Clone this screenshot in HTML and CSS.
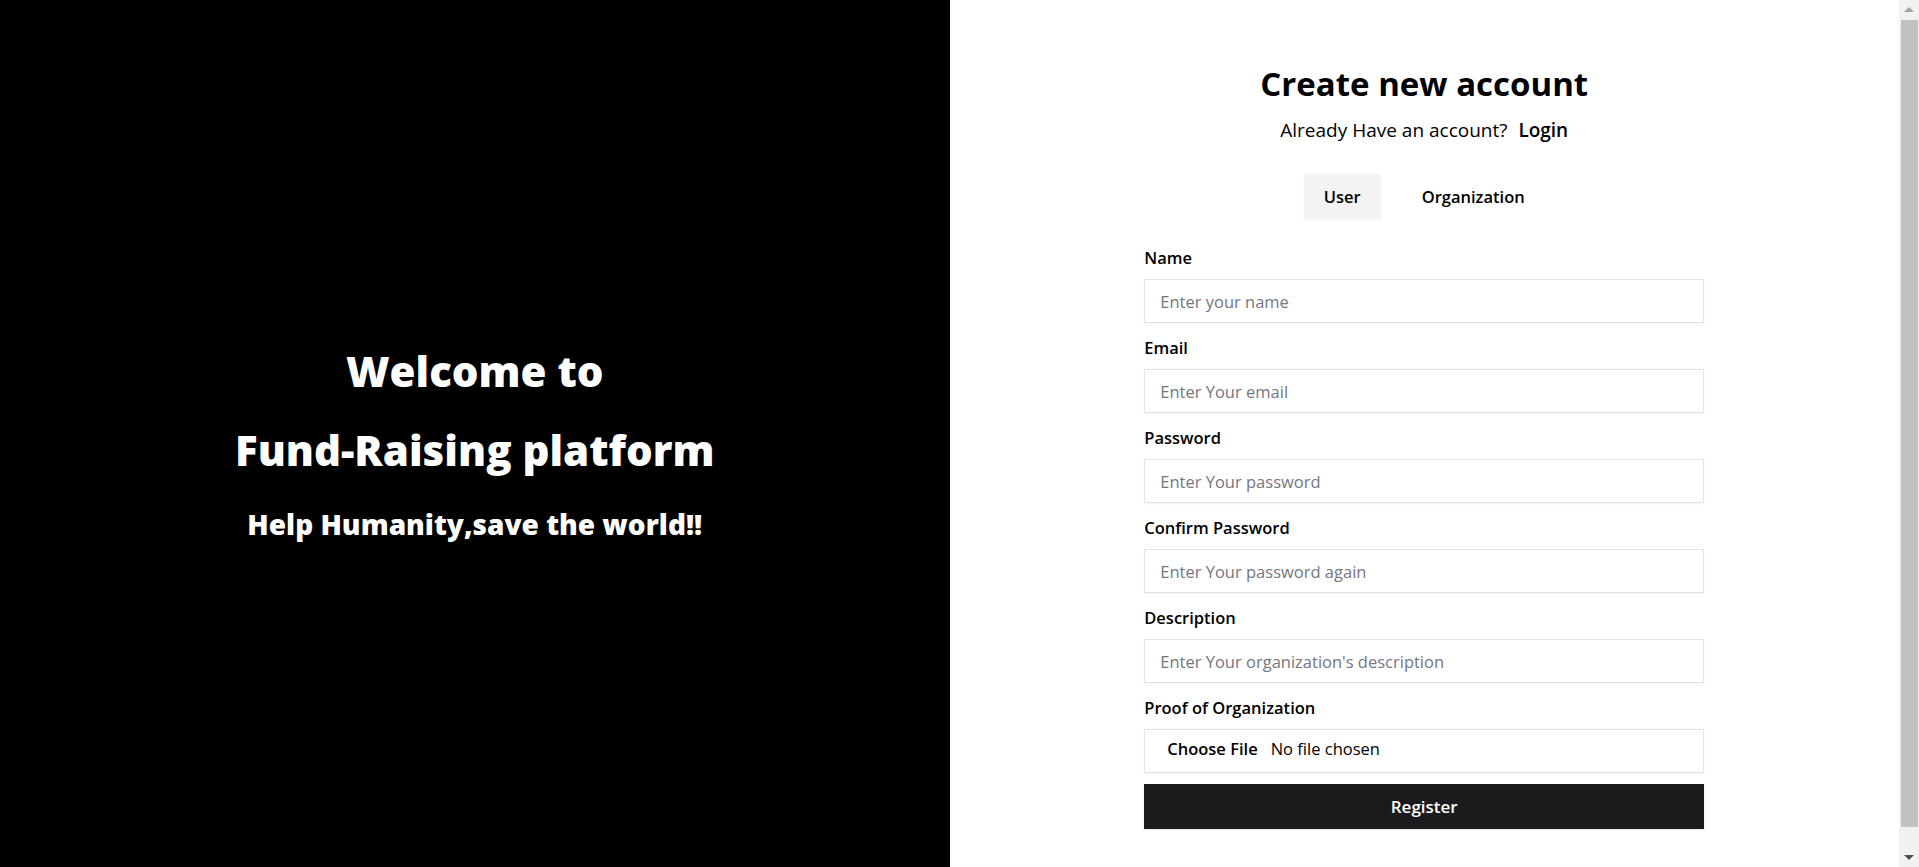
FILE: index.html
```html
<!DOCTYPE html>
<html lang="en">
<head>
<meta charset="utf-8">
<title>Create new account</title>
<link rel="stylesheet" href="styles.css">
</head>
<body>
<div class="page">
  <section class="hero">
    <div class="hero-text">
      <h1 class="hero-line hero-line--welcome">Welcome to</h1>
      <h1 class="hero-line hero-line--brand">Fund-Raising platform</h1>
      <h3 class="hero-line hero-line--sub">Help Humanity,save the world!!</h3>
    </div>
  </section>
  <section class="panel">
    <h2 class="panel-title">Create new account</h2>
    <p class="panel-alt">Already Have an account? <a class="panel-link" href="#">Login</a></p>
    <div class="tabs">
      <button class="tab tab--active" type="button">User</button>
      <button class="tab" type="button">Organization</button>
    </div>
    <form class="form">
      <div class="field">
        <label class="field-label">Name</label>
        <input class="field-input" type="text" placeholder="Enter your name">
      </div>
      <div class="field">
        <label class="field-label">Email</label>
        <input class="field-input" type="email" placeholder="Enter Your email">
      </div>
      <div class="field">
        <label class="field-label">Password</label>
        <input class="field-input" type="password" placeholder="Enter Your password">
      </div>
      <div class="field">
        <label class="field-label">Confirm Password</label>
        <input class="field-input" type="password" placeholder="Enter Your password again">
      </div>
      <div class="field">
        <label class="field-label">Description</label>
        <input class="field-input" type="text" placeholder="Enter Your organization's description">
      </div>
      <div class="field field--last">
        <label class="field-label">Proof of Organization</label>
        <div class="file-field">
          <span class="file-btn">Choose File</span>
          <span class="file-name">No file chosen</span>
        </div>
      </div>
      <button class="submit" type="button">Register</button>
    </form>
  </section>
</div>
<div class="scrollbar" aria-hidden="true">
  <span class="scrollbar-arrow scrollbar-arrow--up"></span>
  <span class="scrollbar-thumb"></span>
  <span class="scrollbar-arrow scrollbar-arrow--down"></span>
</div>
</body>
</html>
```

FILE: styles.css
```css
* {
  box-sizing: border-box;
}

html, body {
  margin: 0;
  padding: 0;
}

body {
  font-family: "Open Sans", "Noto Sans", "Liberation Sans", sans-serif;
  color: #000;
  background: #fff;
}

.page {
  display: flex;
  min-height: 896px;
  margin-right: 20px;
}

/* left hero */
.hero {
  flex: 0 0 50%;
  background: #000;
  color: #fff;
  display: flex;
  align-items: center;
  justify-content: center;
  padding-bottom: 9px;
}

.hero-text {
  text-align: center;
}

.hero-line {
  margin: 0;
  font-weight: 800;
}

.hero-line--welcome {
  font-size: 42px;
  line-height: 50px;
}

.hero-line--brand {
  font-size: 42px;
  line-height: 50px;
  margin-top: 29px;
}

.hero-line--sub {
  font-size: 28px;
  line-height: 36px;
  margin-top: 31px;
}

/* right panel */
.panel {
  flex: 0 0 50%;
  display: flex;
  flex-direction: column;
  align-items: center;
  padding: 62px 0 67px;
}

.panel-title {
  margin: 0;
  font-size: 33px;
  line-height: 43px;
  font-weight: 700;
}

.panel-alt {
  margin: 12px 0 0;
  font-size: 19px;
  line-height: 26px;
}

.panel-link {
  color: #000;
  font-weight: 600;
  text-decoration: none;
  margin-left: 6px;
}

.tabs {
  display: flex;
  gap: 21px;
  margin-top: 31px;
}

.tab {
  font-family: inherit;
  font-size: 16.5px;
  font-weight: 600;
  color: #000;
  background: transparent;
  border: none;
  height: 45px;
  padding: 0 20px;
  cursor: pointer;
}

.tab--active {
  background: #f3f3f3;
  box-shadow: 0 1px 2px rgba(0, 0, 0, 0.06);
}

.form {
  width: 560px;
  margin-top: 28px;
  display: flex;
  flex-direction: column;
}

.field {
  display: flex;
  flex-direction: column;
  margin-bottom: 14px;
}

.field--last {
  margin-bottom: 11px;
}

.field-label {
  font-size: 16.5px;
  line-height: 24px;
  font-weight: 600;
  margin-bottom: 8px;
  position: relative;
  top: -1px;
}

.field-input,
.file-field {
  height: 44px;
  border: 1px solid #e3e3e3;
  box-shadow: 0 1px 2px rgba(0, 0, 0, 0.06);
  background: #fff;
  font-family: inherit;
  font-size: 16.5px;
  padding: 0 15px;
  outline: none;
}

.field-input::placeholder {
  color: #767680;
}

.file-field {
  display: flex;
  align-items: center;
  padding-left: 22px;
  padding-bottom: 5px;
  gap: 13px;
}

.file-btn {
  font-weight: 600;
}

.submit {
  height: 45px;
  border: none;
  background: #1b1b1d;
  color: #fff;
  font-family: inherit;
  font-size: 17px;
  font-weight: 600;
  cursor: pointer;
  box-shadow: 0 1px 2px rgba(0, 0, 0, 0.1);
}

/* faux classic scrollbar */
.scrollbar {
  position: fixed;
  top: 0;
  right: 0;
  bottom: 0;
  width: 20px;
  background: #f1f1f1;
}

.scrollbar-thumb {
  position: absolute;
  top: 20px;
  bottom: 40px;
  left: 2px;
  right: 1px;
  background: #c1c1c1;
}

.scrollbar-arrow {
  position: absolute;
  left: 5px;
  width: 0;
  height: 0;
  border-left: 5px solid transparent;
  border-right: 5px solid transparent;
}

.scrollbar-arrow--up {
  top: 7px;
  border-bottom: 5px solid #a3a3a3;
}

.scrollbar-arrow--down {
  bottom: 7px;
  border-top: 5px solid #505050;
}
```
